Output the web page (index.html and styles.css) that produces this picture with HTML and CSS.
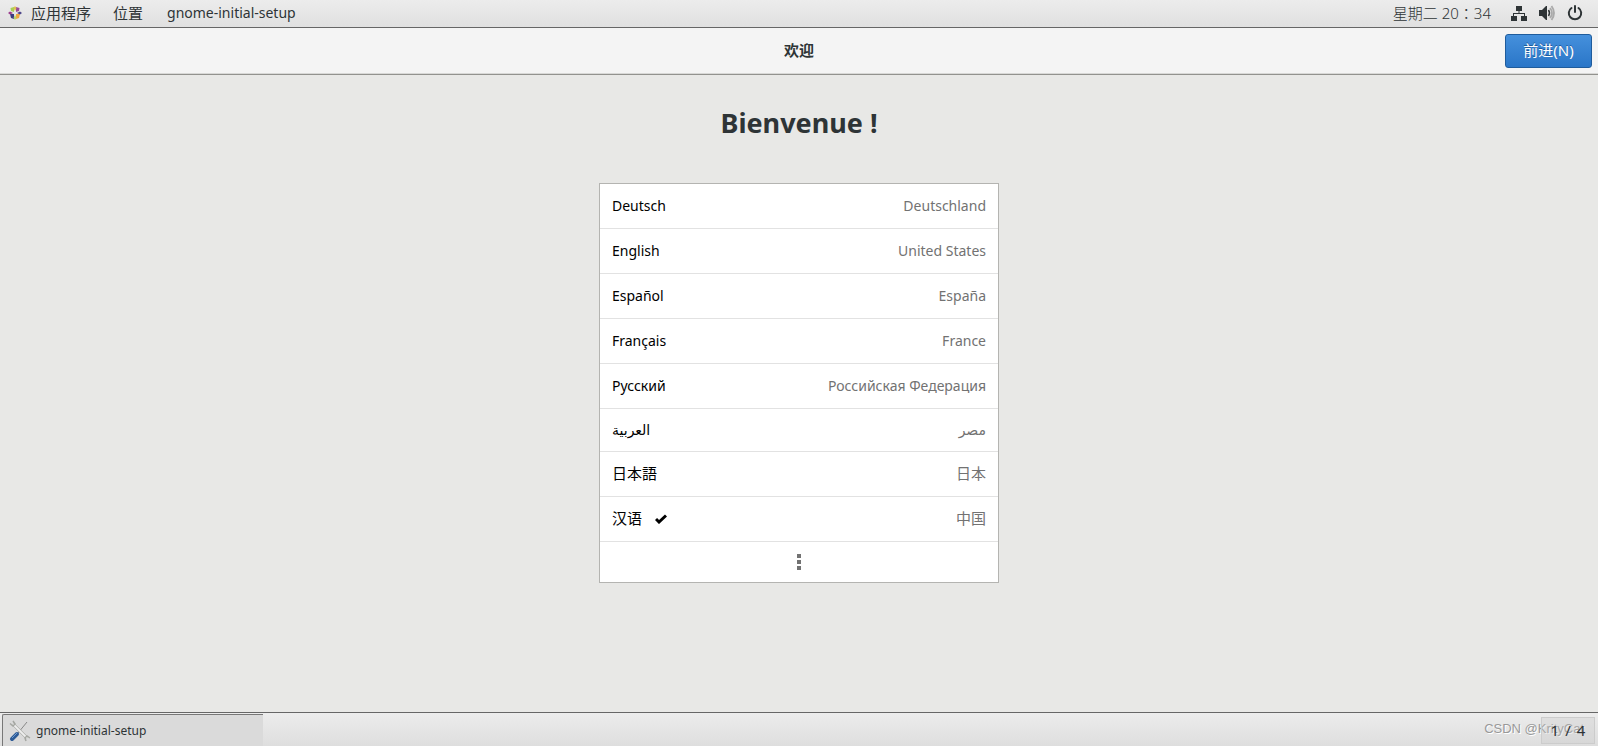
FILE: index.html
```html
<!DOCTYPE html>
<html lang="zh-CN">
<head>
<meta charset="utf-8">
<title>gnome-initial-setup</title>
<link rel="stylesheet" href="styles.css">
</head>
<body>
<nav class="topbar">
  <button class="menu menu-apps">
    <svg class="logo" viewBox="0 0 14 14" aria-hidden="true">
      <path fill="#a8cf55" d="M6 1 2.500 2 3 5l3 1z"/><path fill="#9a4a98" d="m8 1 3.500 1L11 5 8 6z"/>
      <path fill="#efa740" d="m8 8 4 0-1 4-3 1z"/><path fill="#3c3d82" d="M6 8 2 8l1 4 3 1z"/>
      <path fill="#e0c050" d="M7 0 5.500 2 7 5 8.500 2z"/><path fill="#9a3c8c" d="m0 7 2-1.500L5 7 2 8.500z"/>
      <path fill="#4b4488" d="m14 7-2-1.500L9 7l3 1.500z"/><path fill="#b7d26c" d="m7 14-1.500-2L7 9l1.500 3z"/>
    </svg>
    <span>应用程序</span>
  </button>
  <button class="menu">位置</button>
  <button class="menu menu-window">gnome-initial-setup</button>
  <div class="status">
    <time class="clock" lang="zh-TW">星期二 20：34</time>
    <svg class="tray" viewBox="0 0 16 16" role="img" aria-label="网络"><path fill="#2e3436" d="M5 1h6v5H8.500v2H14v3h2v5h-6v-5h3V9H3v2h3v5H0v-5h2V8h5.500V6H5z"/></svg>
    <svg class="tray" viewBox="0 0 16 16" role="img" aria-label="音量"><path fill="#2e3436" d="M0 5h3l4-4h1v14H7l-4-4H0z"/><path fill="none" stroke="#2e3436" stroke-width="1.500" d="M9.500 5q2 3 0 6"/><path fill="none" stroke="#aaa" stroke-width="1.800" d="M11 3q4 5 0 10M12.500 1q5 7 0 14"/></svg>
    <svg class="tray" viewBox="0 0 16 16" role="img" aria-label="电源"><path fill="none" stroke="#2e3436" stroke-width="2" stroke-linecap="round" d="M8 1v6M4.500 3a6.200 6.200 0 1 0 7 0"/></svg>
  </div>
</nav>
<header class="header">
  <h1 class="title">欢迎</h1>
  <button class="next">前进(N)</button>
</header>
<main class="content">
  <h2 class="welcome">Bienvenue !</h2>
  <div class="languages">
    <button class="row"><span>Deutsch</span><span class="country">Deutschland</span></button>
    <button class="row"><span>English</span><span class="country">United States</span></button>
    <button class="row"><span>Español</span><span class="country">España</span></button>
    <button class="row"><span>Français</span><span class="country">France</span></button>
    <button class="row"><span>Русский</span><span class="country">Российская Федерация</span></button>
    <button class="row row-arabic"><span lang="ar">العربية</span><span class="country" lang="ar">مصر</span></button>
    <button class="row row-cjk"><span lang="ja">日本語</span><span class="country" lang="ja">日本</span></button>
    <button class="row row-cjk"><span>汉语</span><svg class="check" viewBox="0 0 12 10" aria-hidden="true"><path fill="none" stroke="#000" stroke-width="3" d="m1 5 3 3 7-6.500"/></svg><span class="country">中国</span></button>
    <button class="row row-more" aria-label="更多"><svg class="dots" viewBox="0 0 4 16" aria-hidden="true"><path fill="#727272" d="M0 0h4v4H0zM0 6h4v4H0zM0 12h4v4H0z"/></svg></button>
  </div>
</main>
<footer class="taskbar">
  <button class="task">
    <svg class="tools" viewBox="0 0 22 22" aria-hidden="true">
      <path stroke="#888" stroke-width="1" d="m9 13 9-11"/>
      <path stroke="#9b9d98" stroke-width="3" d="m4 4 14 14"/><path stroke="#eee" stroke-width="2" d="m4 4 14 14"/>
      <path fill="none" stroke="#a5a7a2" stroke-width="1.500" d="M1 3.500 4 6l2-2-2-3m13 20-1-3 2-2 3 2"/>
      <path stroke="#2e5b96" stroke-width="4" stroke-linecap="round" d="m3 19 5-5"/><path stroke="#6f9bd0" stroke-width="1" d="m3 18 5-5"/>
    </svg>
    <span>gnome-initial-setup</span>
  </button>
  <button class="pager"><span>1</span><span>/</span><span>4</span></button>
  <span class="watermark">CSDN @KrityCat</span>
</footer>
</body>
</html>
```
FILE: styles.css
```css
* { box-sizing: border-box; }
body {
  margin: 0;
  min-height: 100vh;
  display: flex;
  flex-direction: column;
  background: #e8e8e6;
  color: #2e3436;
  font: 14px/20px "Noto Sans", "Noto Sans CJK SC", sans-serif;
}
button { font: inherit; color: inherit; border: 0; background: none; padding: 0; }
svg { display: block; flex: none; }

.topbar {
  display: flex;
  align-items: center;
  height: 28px;
  padding: 0 15px 2px 8px;
  background: linear-gradient(#ececec, #e0e0e0);
  border-bottom: 1px solid #666;
  font-size: 15px;
}
.menu { display: flex; align-items: center; gap: 9px; margin-right: 22px; }
.menu-window { font-size: 14px; margin-left: 2px; }
.logo { width: 14px; height: 14px; }
.status { display: flex; align-items: center; gap: 12px; margin-left: auto; }
.clock { margin-right: 8px; font-family: "Noto Sans", "Noto Sans CJK TC", sans-serif; font-weight: 300; }
.tray { width: 16px; height: 16px; }

.header {
  display: grid;
  grid-template-columns: 1fr auto 1fr;
  align-items: center;
  height: 47px;
  padding: 0 6px;
  background: #f4f4f4;
  border-bottom: 1px solid #92928e;
  box-shadow: inset 0 -1px #d8d8d6;
}
.title { grid-column: 2; margin: 0; padding-bottom: 2px; font-size: 15px; line-height: 20px; }
.next {
  justify-self: end;
  width: 87px;
  height: 34px;
  padding-bottom: 2px;
  border: 1px solid #1f5c9c;
  border-radius: 3px;
  background: linear-gradient(#4590dc, #2a76c8);
  color: #fff;
  font-size: 15px;
  text-shadow: 0 -1px #1f5c9c;
}

.content { flex: 1; display: flex; flex-direction: column; align-items: center; padding: 28px 16px; }
.welcome { margin: 0 0 40px; font: 700 27px/40px "Noto Sans", sans-serif; }
.languages { width: 100%; max-width: 400px; border: 1px solid #b4b4b1; background: #fff; }
.row {
  display: flex;
  align-items: center;
  width: 100%;
  height: 45px;
  padding: 0 12px;
  border-bottom: 1px solid #e2e2e2;
  color: #000;
}
.row-arabic { height: 43px; font-family: "DejaVu Sans", sans-serif; }
.row-cjk { font-size: 15px; padding-bottom: 2px; }
.row-more { height: 40px; justify-content: center; border-bottom: 0; }
.country { margin-left: auto; color: #727272; }
.check { width: 12px; height: 10px; margin: 2px 0 0 13px; }
.dots { width: 4px; height: 16px; }

.taskbar {
  position: relative;
  display: flex;
  align-items: center;
  height: 34px;
  padding: 1px 3px 0 2px;
  border-top: 1px solid #666;
  background: linear-gradient(#ececec, #dedede);
}
.task {
  display: flex;
  align-items: center;
  gap: 5px;
  width: 261px;
  height: 32px;
  padding-left: 6px;
  border-top: 1px solid #777;
  border-left: 1px solid #777;
  border-radius: 2px 0 0;
  background: #dadada;
  font-size: 12px;
}
.tools { width: 22px; height: 22px; }
.pager {
  position: relative;
  z-index: 1;
  display: flex;
  align-items: center;
  justify-content: center;
  gap: 6px;
  margin-left: auto;
  width: 54px;
  height: 27px;
  border: 1px solid #ccc;
  background: rgb(200 200 200 / 30%);
  font-size: 15px;
}
.watermark {
  position: absolute;
  right: 14px;
  top: 6px;
  color: #999;
  font: 13px/20px "Liberation Sans", sans-serif;
  text-shadow: 1px 1px #fff;
}
```
